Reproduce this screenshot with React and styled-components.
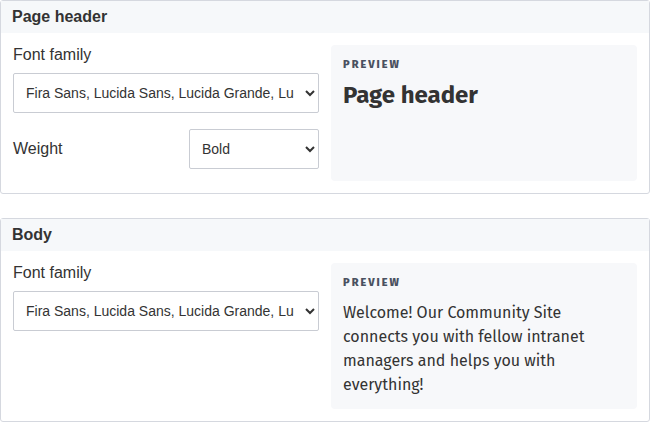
import React from 'react'
import styled, { createGlobalStyle } from 'styled-components'

const Global = createGlobalStyle`
  body {
    margin: 0;
    background: #fff;
    font-family: 'Liberation Sans', Arial, sans-serif;
    color: #333;
  }
`

const Page = styled.div`
  display: flex;
  flex-direction: column;
  gap: 24px;
`

const Card = styled.section`
  border: 1px solid #d5d8df;
  border-radius: 3px;
  background: #fff;
`

const CardHeader = styled.h2`
  margin: 0;
  height: 32px;
  line-height: 32px;
  padding: 0 11px;
  background: #f6f8fa;
  font-size: 16px;
  font-weight: bold;
  color: #333;
`

const CardBody = styled.div`
  display: grid;
  grid-template-columns: 1fr 1fr;
  gap: 12px;
  padding: 12px;
`

const Controls = styled.div`
  display: flex;
  flex-direction: column;
`

const Label = styled.label`
  display: block;
  font-size: 16px;
  line-height: 20px;
  color: #333;
  margin: 0 0 8px;
`

const Row = styled.div`
  display: flex;
  align-items: center;
  justify-content: space-between;
  margin-top: 16px;

  ${Label} {
    margin: 0;
  }
`

const Select = styled.select`
  box-sizing: border-box;
  width: ${p => p.$width || '100%'};
  height: 40px;
  padding: 0 8px;
  border: 1px solid #c9ccd3;
  border-radius: 2px;
  background: #fff;
  font-family: 'Liberation Sans', Arial, sans-serif;
  font-size: 14px;
  color: #333;
`

const Preview = styled.div`
  box-sizing: border-box;
  background: #f7f8fa;
  border-radius: 4px;
  padding: 14px 12px 12px;
  font-family: 'Fira Sans', 'Open Sans', sans-serif;
  color: #333;
  min-height: ${p => p.$minHeight || 0}px;
`

const Eyebrow = styled.div`
  font-family: 'Fira Sans', 'Liberation Sans', sans-serif;
  font-size: 11px;
  font-weight: 800;
  letter-spacing: 2px;
  color: #4a5160;
  line-height: 12px;
  margin-bottom: ${p => p.$gap || 9}px;
`

const PreviewHeading = styled.div`
  font-size: 24px;
  font-weight: bold;
  line-height: 30px;
  color: #333;
`

const PreviewText = styled.p`
  margin: 0;
  font-size: 16px;
  line-height: 24px;
  color: #333;
`

const fontStack = 'Fira Sans, Lucida Sans, Lucida Grande, Lucida Sans Unicode, sans-serif'

export default function App() {
  return (
    <>
      <Global />
      <Page>
        <Card>
          <CardHeader>Page header</CardHeader>
          <CardBody>
            <Controls>
              <Label>Font family</Label>
              <Select defaultValue={fontStack}>
                <option value={fontStack}>{fontStack}</option>
              </Select>
              <Row>
                <Label>Weight</Label>
                <Select $width="130px" defaultValue="bold">
                  <option value="normal">Normal</option>
                  <option value="bold">Bold</option>
                </Select>
              </Row>
            </Controls>
            <Preview $minHeight={136}>
              <Eyebrow>PREVIEW</Eyebrow>
              <PreviewHeading>Page header</PreviewHeading>
            </Preview>
          </CardBody>
        </Card>
        <Card>
          <CardHeader>Body</CardHeader>
          <CardBody>
            <Controls>
              <Label>Font family</Label>
              <Select defaultValue={fontStack}>
                <option value={fontStack}>{fontStack}</option>
              </Select>
            </Controls>
            <Preview>
              <Eyebrow $gap={12}>PREVIEW</Eyebrow>
              <PreviewText>
                Welcome! Our Community Site connects you with fellow intranet managers and helps you with everything!
              </PreviewText>
            </Preview>
          </CardBody>
        </Card>
      </Page>
    </>
  )
}
